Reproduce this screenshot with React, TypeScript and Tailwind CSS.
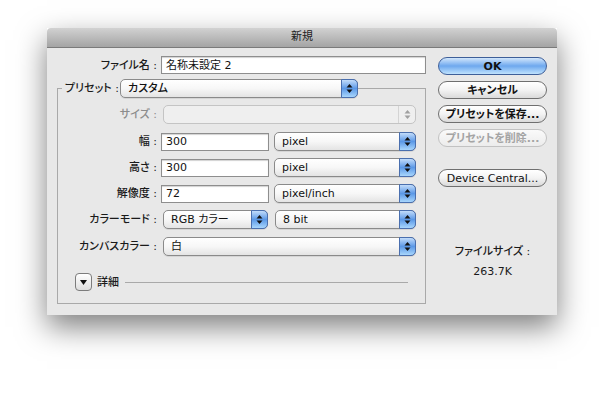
import React from "react";

const font = "[font-family:'DejaVu_Sans','Noto_Sans_CJK_JP',sans-serif] [font-feature-settings:'palt']";

const Arrows = ({ dim }: { dim?: boolean }) => (
  <svg width="7" height="11" viewBox="0 0 7 11">
    <path d="M3.5 1 L6.5 4.5 L0.5 4.5 Z" fill={dim ? "#a0a0a0" : "#111"} />
    <path d="M3.5 10 L6.5 6.5 L0.5 6.5 Z" fill={dim ? "#a0a0a0" : "#111"} />
  </svg>
);

const Popup = ({ text, className, disabled }: { text?: string; className: string; disabled?: boolean }) => (
  <div
    className={`flex h-[19px] items-stretch rounded-[5px] border ${
      disabled ? "border-[#c4c4c4] bg-[#efefef]" : "border-[#8a8a8a] bg-gradient-to-b from-white via-[#f7f7f7] to-[#e4e4e4] shadow-[0_1px_0_rgba(0,0,0,0.08)]"
    } ${className}`}
  >
    <div className="flex flex-1 items-center whitespace-nowrap pl-[7px] text-[11px] leading-none text-[#111]">{text}</div>
    {disabled ? (
      <div className="flex w-[17px] items-center justify-center border-l border-[#d4d4d4]">
        <Arrows dim />
      </div>
    ) : (
      <div className="-my-px -mr-px flex w-[17px] items-center justify-center rounded-r-[5px] border border-[#4a6fae] bg-gradient-to-b from-[#c2dcfa] via-[#5b98e6] to-[#a8d6fc]">
        <Arrows />
      </div>
    )}
  </div>
);

const Field = ({ value, className }: { value: string; className: string }) => (
  <div
    className={`flex h-[18px] items-center border border-[#8e8e8e] bg-white pl-[4px] text-[11px] leading-none text-[#111] shadow-[inset_0_1px_1px_rgba(0,0,0,0.18)] ${className}`}
  >
    {value}
  </div>
);

const Label = ({ text, dim }: { text: string; dim?: boolean }) => (
  <div className={`w-[99px] whitespace-nowrap text-right text-[11px] font-medium leading-none ${dim ? "text-[#8c8c8c]" : "text-[#1a1a1a]"}`}>
    {text}
  </div>
);

const Btn = ({ text, primary, disabled, className = "" }: { text: string; primary?: boolean; disabled?: boolean; className?: string }) => (
  <div
    className={`flex h-[18px] w-[109px] items-center justify-center whitespace-nowrap rounded-full border text-[11px] leading-none ${
      primary
        ? "border-[#3e5f99] bg-gradient-to-b from-[#d2e6fb] via-[#6ea8ee] to-[#bfe2fd] font-semibold text-[#111]"
        : disabled
        ? "border-[#c2c2c2] bg-gradient-to-b from-[#fafafa] to-[#ececec] font-semibold text-[#a4a4a4]"
        : "border-[#6f6f6f] bg-gradient-to-b from-white via-[#f3f3f3] to-[#dadada] text-[#111]"
    } ${className}`}
  >
    {text}
  </div>
);

export default function App() {
  return (
    <div className={`h-[399px] w-[600px] overflow-hidden bg-white pl-[47px] pt-[28px] ${font}`}>
      <div className="flex h-[287px] w-[510px] flex-col shadow-[0_12px_28px_rgba(0,0,0,0.5)]">
        {/* title bar */}
        <div className="flex h-[20px] items-center justify-center rounded-t-[4px] border-b border-[#7a7a7a] bg-gradient-to-b from-[#d2d2d2] to-[#a4a4a4] text-[11px] text-[#222]">
          新規
        </div>

        <div className="flex flex-1 bg-[#e8e8e8]">
          {/* left side */}
          <div className="w-[391px] pl-[10px] pt-[8px]">
            <div className="flex items-center">
              <div className="w-[100px] whitespace-nowrap text-right text-[11px] font-medium leading-none text-[#1a1a1a]">ファイル名 :</div>
              <Field value="名称未設定 2" className="ml-[4px] w-[265px]" />
            </div>

            <div className="mt-[14px] h-[216px] w-[369px] border border-[#a9a9a9]">
              {/* preset row sits on the top border */}
              <div className="-mt-[10px] flex items-center">
                <div className="ml-[4px] w-[58px] whitespace-nowrap bg-[#e8e8e8] pl-[3px] text-[11px] font-medium leading-[14px] text-[#1a1a1a]">プリセット :</div>
                <Popup text="カスタム" className="w-[238px] font-medium" />
              </div>

              <div className="mt-[7px] flex items-center">
                <Label text="サイズ :" dim />
                <Popup disabled className="ml-[6px] w-[253px]" />
              </div>

              <div className="mt-[8px] flex items-center">
                <Label text="幅 :" />
                <Field value="300" className="ml-[4px] w-[108px]" />
                <Popup text="pixel" className="ml-[5px] w-[142px]" />
              </div>

              <div className="mt-[7px] flex items-center">
                <Label text="高さ :" />
                <Field value="300" className="ml-[4px] w-[108px]" />
                <Popup text="pixel" className="ml-[5px] w-[142px]" />
              </div>

              <div className="mt-[7px] flex items-center">
                <Label text="解像度 :" />
                <Field value="72" className="ml-[4px] w-[108px]" />
                <Popup text="pixel/inch" className="ml-[5px] w-[142px]" />
              </div>

              <div className="mt-[7px] flex items-center">
                <Label text="カラーモード :" />
                <Popup text="RGB カラー" className="ml-[6px] w-[105px]" />
                <Popup text="8 bit" className="ml-[7px] w-[141px]" />
              </div>

              <div className="mt-[8px] flex items-center">
                <Label text="カンバスカラー :" />
                <Popup text="白" className="ml-[6px] w-[253px]" />
              </div>

              <div className="mt-[17px] flex items-center">
                <div className="ml-[17px] flex h-[18px] w-[17px] items-center justify-center rounded-[4px] border border-[#7c7c7c] bg-gradient-to-b from-white to-[#dedede]">
                  <svg width="7" height="5" viewBox="0 0 7 5">
                    <path d="M0 0 L7 0 L3.5 5 Z" fill="#111" />
                  </svg>
                </div>
                <div className="ml-[5px] text-[11px] font-medium leading-none text-[#1a1a1a]">詳細</div>
                <div className="ml-[6px] h-px w-[283px] bg-[#a9a9a9]" />
              </div>
            </div>
          </div>

          {/* right side */}
          <div className="flex w-[109px] flex-col pt-[9px]">
            <Btn text="OK" primary />
            <Btn text="キャンセル" className="mt-[6px] font-semibold" />
            <Btn text="プリセットを保存..." className="mt-[6px] font-semibold" />
            <Btn text="プリセットを削除..." disabled className="mt-[6px]" />
            <Btn text="Device Central..." className="mt-[22px]" />
            <div className="mt-[59px] text-center text-[11px] font-medium leading-none text-[#1a1a1a]">ファイルサイズ :</div>
            <div className="mt-[9px] text-center text-[11px] leading-none text-[#1a1a1a]">263.7K</div>
          </div>
        </div>
      </div>
    </div>
  );
}
